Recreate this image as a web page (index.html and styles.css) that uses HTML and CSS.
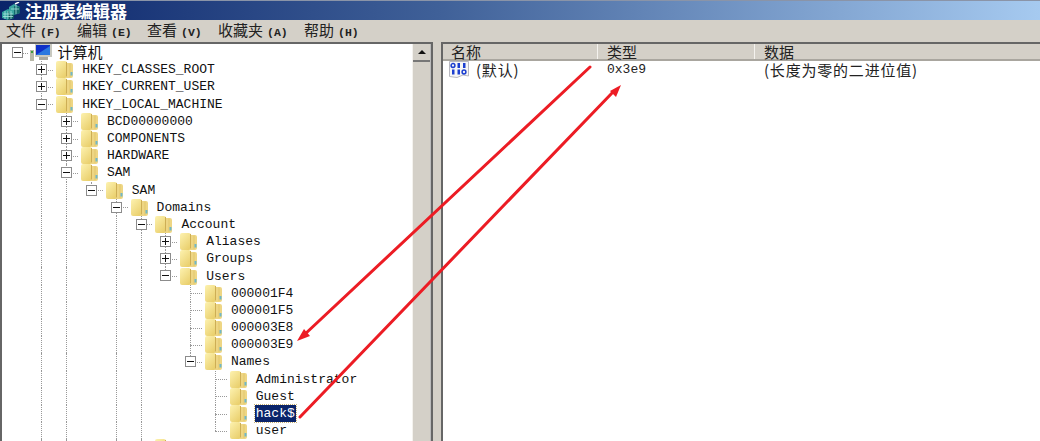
FILE: index.html
```html
<!DOCTYPE html>
<html lang="zh-CN">
<head>
  <meta charset="UTF-8">
  <title>注册表编辑器</title>
  <link rel="stylesheet" href="styles.css">
</head>
<body>
  <svg class="defs" width="0" height="0">
    <defs>
      <linearGradient id="folderFill" x1="0" y1="0" x2="0.7" y2="1">
        <stop offset="0" stop-color="#fdf2b0"/>
        <stop offset="1" stop-color="#ead06e"/>
      </linearGradient>
      <symbol id="folder" viewBox="0 0 17 17">
        <path d="M11 2 H15 Q17 2 17 4 V15 Q17 17 15 17 H8 L11 15 Z" fill="#eed684"/>
        <path d="M0 2 Q0 0 2 0 H9 L11 1 V15 L9 17 H2 Q0 17 0 15 Z" fill="url(#folderFill)"/>
        <path d="M10.5 1 V15.5" stroke="#cdae55" stroke-width="1"/>
        <path d="M14 2.5 V16" stroke="#e2c76c" stroke-width="1"/>
        <rect x="14.5" y="11" width="2" height="3.5" fill="#6fb7c9"/>
      </symbol>
    </defs>
  </svg>

  <div class="titlebar">
    <svg class="app-icon" width="21" height="18" viewBox="0 0 21 18">
      <path d="M1 10 L7 7 L13 10 L13 16 L7 18 L1 16 Z" fill="#2f9f9c"/>
      <path d="M7 9 L13 10 L13 16 L7 18 Z" fill="#0f5a60"/>
      <path d="M8 5 L13 2 L19 5 L19 11 L13 13 L8 11 Z" fill="#3aa6a0"/>
      <path d="M13 4 L19 5 L19 11 L13 13 Z" fill="#14686c"/>
      <path d="M2 12 H12 M2 14.5 H12 M4 9 V17 M7 9 V17 M10 9 V17 M10 7 H18 M15 3 V12" stroke="#a8e6e0" stroke-width="0.8"/>
      <path d="M14 2 L18 0" stroke="#ffffff" stroke-width="1.4"/>
    </svg>
    <span class="app-title">注册表编辑器</span>
  </div>

  <div class="menubar">
    <span class="menu-item m1">文件<i>(F)</i></span>
    <span class="menu-item m2">编辑<i>(E)</i></span>
    <span class="menu-item m3">查看<i>(V)</i></span>
    <span class="menu-item m4">收藏夹<i>(A)</i></span>
    <span class="menu-item m5">帮助<i>(H)</i></span>
  </div>

  <div class="main">
    <div class="tree-pane">
      <div class="tree">
        <!-- 计算机 -->
        <div class="row">
          <span class="cell stub"><i class="box minus"></i></span>
          <svg class="pc-icon" width="22" height="18" viewBox="0 0 22 18">
            <rect x="0" y="6" width="4" height="11" fill="#b8b8a8"/>
            <rect x="1" y="7" width="2" height="2" fill="#3c9a3c"/>
            <rect x="5" y="0" width="17" height="13" fill="#c9c9c0"/>
            <rect x="6" y="1" width="14" height="10" fill="#1030c8"/>
            <path d="M6 11 L20 2 V11 Z" fill="#2a78e0"/>
            <rect x="9" y="13" width="9" height="3" fill="#a8a8a0"/>
          </svg>
          <span class="label cjk">计算机</span>
        </div>

        <div class="row"><span class="cell"></span><span class="cell tee"><i class="box plus"></i></span><svg class="folder"><use href="#folder"/></svg><span class="label">HKEY_CLASSES_ROOT</span></div>
        <div class="row"><span class="cell"></span><span class="cell tee"><i class="box plus"></i></span><svg class="folder"><use href="#folder"/></svg><span class="label">HKEY_CURRENT_USER</span></div>
        <div class="row"><span class="cell"></span><span class="cell tee"><i class="box minus"></i></span><svg class="folder"><use href="#folder"/></svg><span class="label">HKEY_LOCAL_MACHINE</span></div>

        <div class="row"><span class="cell"></span><span class="cell line"></span><span class="cell tee"><i class="box plus"></i></span><svg class="folder"><use href="#folder"/></svg><span class="label">BCD00000000</span></div>
        <div class="row"><span class="cell"></span><span class="cell line"></span><span class="cell tee"><i class="box plus"></i></span><svg class="folder"><use href="#folder"/></svg><span class="label">COMPONENTS</span></div>
        <div class="row"><span class="cell"></span><span class="cell line"></span><span class="cell tee"><i class="box plus"></i></span><svg class="folder"><use href="#folder"/></svg><span class="label">HARDWARE</span></div>
        <div class="row"><span class="cell"></span><span class="cell line"></span><span class="cell tee"><i class="box minus"></i></span><svg class="folder"><use href="#folder"/></svg><span class="label">SAM</span></div>

        <div class="row"><span class="cell"></span><span class="cell line"></span><span class="cell line"></span><span class="cell end"><i class="box minus"></i></span><svg class="folder"><use href="#folder"/></svg><span class="label">SAM</span></div>

        <div class="row"><span class="cell"></span><span class="cell line"></span><span class="cell line"></span><span class="cell"></span><span class="cell tee"><i class="box minus"></i></span><svg class="folder"><use href="#folder"/></svg><span class="label">Domains</span></div>

        <div class="row"><span class="cell"></span><span class="cell line"></span><span class="cell line"></span><span class="cell"></span><span class="cell line"></span><span class="cell tee"><i class="box minus"></i></span><svg class="folder"><use href="#folder"/></svg><span class="label">Account</span></div>

        <div class="row"><span class="cell"></span><span class="cell line"></span><span class="cell line"></span><span class="cell"></span><span class="cell line"></span><span class="cell line"></span><span class="cell tee"><i class="box plus"></i></span><svg class="folder"><use href="#folder"/></svg><span class="label">Aliases</span></div>
        <div class="row"><span class="cell"></span><span class="cell line"></span><span class="cell line"></span><span class="cell"></span><span class="cell line"></span><span class="cell line"></span><span class="cell tee"><i class="box plus"></i></span><svg class="folder"><use href="#folder"/></svg><span class="label">Groups</span></div>
        <div class="row"><span class="cell"></span><span class="cell line"></span><span class="cell line"></span><span class="cell"></span><span class="cell line"></span><span class="cell line"></span><span class="cell end"><i class="box minus"></i></span><svg class="folder"><use href="#folder"/></svg><span class="label">Users</span></div>

        <div class="row"><span class="cell"></span><span class="cell line"></span><span class="cell line"></span><span class="cell"></span><span class="cell line"></span><span class="cell line"></span><span class="cell"></span><span class="cell tee"></span><svg class="folder"><use href="#folder"/></svg><span class="label">000001F4</span></div>
        <div class="row"><span class="cell"></span><span class="cell line"></span><span class="cell line"></span><span class="cell"></span><span class="cell line"></span><span class="cell line"></span><span class="cell"></span><span class="cell tee"></span><svg class="folder"><use href="#folder"/></svg><span class="label">000001F5</span></div>
        <div class="row"><span class="cell"></span><span class="cell line"></span><span class="cell line"></span><span class="cell"></span><span class="cell line"></span><span class="cell line"></span><span class="cell"></span><span class="cell tee"></span><svg class="folder"><use href="#folder"/></svg><span class="label">000003E8</span></div>
        <div class="row"><span class="cell"></span><span class="cell line"></span><span class="cell line"></span><span class="cell"></span><span class="cell line"></span><span class="cell line"></span><span class="cell"></span><span class="cell tee"></span><svg class="folder"><use href="#folder"/></svg><span class="label">000003E9</span></div>
        <div class="row"><span class="cell"></span><span class="cell line"></span><span class="cell line"></span><span class="cell"></span><span class="cell line"></span><span class="cell line"></span><span class="cell"></span><span class="cell end"><i class="box minus"></i></span><svg class="folder"><use href="#folder"/></svg><span class="label">Names</span></div>

        <div class="row"><span class="cell"></span><span class="cell line"></span><span class="cell line"></span><span class="cell"></span><span class="cell line"></span><span class="cell line"></span><span class="cell"></span><span class="cell"></span><span class="cell tee"></span><svg class="folder"><use href="#folder"/></svg><span class="label">Administrator</span></div>
        <div class="row"><span class="cell"></span><span class="cell line"></span><span class="cell line"></span><span class="cell"></span><span class="cell line"></span><span class="cell line"></span><span class="cell"></span><span class="cell"></span><span class="cell tee"></span><svg class="folder"><use href="#folder"/></svg><span class="label">Guest</span></div>
        <div class="row"><span class="cell"></span><span class="cell line"></span><span class="cell line"></span><span class="cell"></span><span class="cell line"></span><span class="cell line"></span><span class="cell"></span><span class="cell"></span><span class="cell tee"></span><svg class="folder"><use href="#folder"/></svg><span class="label selected">hack$</span></div>
        <div class="row"><span class="cell"></span><span class="cell line"></span><span class="cell line"></span><span class="cell"></span><span class="cell line"></span><span class="cell line"></span><span class="cell"></span><span class="cell"></span><span class="cell end"></span><svg class="folder"><use href="#folder"/></svg><span class="label">user</span></div>

        <!-- next key, only the top of its folder shows -->
        <div class="row"><span class="cell"></span><span class="cell line"></span><span class="cell line"></span><span class="cell"></span><span class="cell line"></span><span class="cell line"></span><svg class="folder"><use href="#folder"/></svg></div>
      </div>
      <div class="scrollbar">
        <div class="scroll-btn"><span class="arrow-up"></span></div>
      </div>
    </div>

    <div class="splitter"></div>

    <div class="list-pane">
      <div class="list-head">
        <span class="col-name">名称</span>
        <span class="col-type">类型</span>
        <span class="col-data">数据</span>
      </div>
      <div class="list-row">
        <span class="col-name value-name">
          <svg class="bin-icon" width="20" height="17" viewBox="0 0 20 17">
            <path d="M0.5 0.5 H19.5 V15 L14 14 L8 16.5 L0.5 15.5 Z" fill="#f6f6f6" stroke="#b8b8c0"/>
            <circle cx="4" cy="4.5" r="1.9" fill="none" stroke="#1c3fd0" stroke-width="1.5"/>
            <rect x="8.5" y="2" width="2.5" height="5" fill="#1c3fd0"/>
            <rect x="14" y="2" width="2.5" height="5" fill="#1c3fd0"/>
            <rect x="3" y="8.5" width="2.5" height="5" fill="#1c3fd0"/>
            <rect x="8.5" y="8.5" width="2.5" height="5" fill="#1c3fd0"/>
            <circle cx="15" cy="11" r="1.9" fill="none" stroke="#1c3fd0" stroke-width="1.5"/>
          </svg>
          <span class="cjk-value">(默认)</span>
        </span>
        <span class="col-type mono-value">0x3e9</span>
        <span class="col-data cjk-value">(长度为零的二进位值)</span>
      </div>
    </div>
  </div>

  <!-- red annotation arrows -->
  <svg class="arrows" width="1040" height="441" viewBox="0 0 1040 441">
    <g stroke="#ec1c24" stroke-width="3" stroke-linecap="round" fill="none">
      <path d="M590 67 L304 335"/>
      <path d="M300 417 L613 92"/>
    </g>
    <g fill="#ec1c24">
      <path d="M297 341 L304 329 L310 336 Z"/>
      <path d="M621 85 L610 91 L616 97 Z"/>
    </g>
  </svg>
</body>
</html>
```

FILE: styles.css
```css
html, body {
  margin: 0;
  padding: 0;
}
body {
  position: relative;
  width: 1040px;
  height: 441px;
  overflow: hidden;
  background: #d4d0c8;
  font-family: "Liberation Mono", monospace;
  color: #111;
}
.defs { position: absolute; }

/* title bar */
.titlebar {
  height: 20px;
  box-sizing: border-box;
  border-top: 1px solid #8a94a8;
  display: flex;
  align-items: center;
  gap: 3px;
  padding-left: 1px;
  background: linear-gradient(to right, #0a246a, #3f6098 42%, #a6caf0);
}
.app-title {
  font-family: "Noto Sans CJK SC", sans-serif;
  font-size: 17px;
  font-weight: bold;
  line-height: 16px;
  color: #fff;
}

/* menu */
.menubar {
  height: 22px;
  display: flex;
  align-items: center;
  padding-left: 6px;
  font-family: "Noto Sans CJK SC", sans-serif;
  font-size: 15px;
  line-height: 18px;
  color: #222;
}
.menu-item i {
  font-family: "Liberation Mono", monospace;
  font-style: normal;
  font-weight: bold;
  font-size: 11.5px;
  margin-left: 4px;
}
.m1 { width: 71px; }
.m2 { width: 70px; }
.m3 { width: 71px; }
.m4 { width: 86px; }

/* panes */
.main {
  display: flex;
  height: 399px;
}
.tree-pane {
  flex: none;
  width: 433px;
  box-sizing: border-box;
  border-left: 2px solid #666;
  border-right: 2px solid #666;
  border-top: 2px solid #666;
  display: flex;
  background: #fff;
}
.tree {
  flex: 1;
  overflow: hidden;
  padding-left: 2.6px;
}
.row {
  display: flex;
  align-items: center;
  height: 17.2px;
  font-size: 13px;
}
.cell {
  position: relative;
  flex: none;
  width: 24.8px;
  height: 100%;
}
/* dotted tree connectors */
.line::before, .tee::before, .end::before {
  content: "";
  position: absolute;
  left: 12px;
  top: 0;
  bottom: 0;
  border-left: 1px dotted #999;
}
.end::before { bottom: 50%; }
.tee::after, .end::after, .stub::after {
  content: "";
  position: absolute;
  left: 12px;
  right: 1px;
  top: 50%;
  border-top: 1px dotted #999;
}
/* expander boxes, sit over the connectors */
.box {
  position: absolute;
  z-index: 1;
  left: 7px;
  top: 3px;
  width: 9px;
  height: 9px;
  border: 1px solid #8c8c8c;
  background: #fff;
}
.box::before {
  content: "";
  position: absolute;
  left: 1px;
  right: 1px;
  top: 4px;
  height: 1px;
  background: #111;
}
.plus::after {
  content: "";
  position: absolute;
  top: 1px;
  bottom: 1px;
  left: 4px;
  width: 1px;
  background: #111;
}
.folder {
  flex: none;
  width: 17px;
  height: 17px;
  margin-left: 2px;
  margin-right: 8px;
}
.pc-icon {
  flex: none;
  margin-left: 1px;
  margin-right: 4px;
}
.label {
  white-space: nowrap;
  padding: 1px 1px 0;
  line-height: 16px;
}
.label.cjk {
  font-family: "Noto Sans CJK SC", sans-serif;
  font-size: 15px;
  padding-top: 0;
  margin-top: -1px;
}
.label.selected {
  background: #0a246a;
  color: #fff;
  outline: 1px dotted #c8b070;
}
.scrollbar {
  flex: none;
  width: 19px;
  box-sizing: border-box;
  background: #d4d0c8;
  border-left: 1px solid #f4f2ee;
  border-right: 1px solid #bbb;
}
.scroll-btn {
  height: 16px;
  display: flex;
  align-items: center;
  justify-content: center;
  border-bottom: 2px solid #777;
}
.arrow-up {
  width: 0;
  height: 0;
  border-left: 4px solid transparent;
  border-right: 4px solid transparent;
  border-bottom: 4px solid #111;
}
.splitter {
  flex: none;
  width: 8px;
}
.list-pane {
  flex: 1;
  background: #fff;
  border-top: 2px solid #666;
  border-left: 2px solid #666;
}
.list-head {
  display: flex;
  height: 15px;
  background: #d4d0c8;
  border-bottom: 2px solid #a9a69f;
  font-family: "Noto Sans CJK SC", sans-serif;
  font-size: 15px;
  line-height: 15px;
  color: #222;
}
.col-name { flex: none; width: 155px; padding-left: 8px; box-sizing: border-box; }
.col-type { flex: none; width: 157px; padding-left: 9px; box-sizing: border-box; }
.col-data { flex: none; width: 280px; padding-left: 9px; box-sizing: border-box; }
.list-head .col-name, .list-head .col-type { border-right: 1px solid #f4f2ee; }
.list-row {
  display: flex;
  align-items: center;
  height: 17px;
  color: #222;
}
.value-name {
  display: flex;
  align-items: center;
  gap: 7px;
  padding-left: 6px;
}
.cjk-value {
  font-family: "Noto Sans CJK SC", sans-serif;
  font-size: 15px;
  line-height: 17px;
  letter-spacing: 0.8px;
}
.mono-value { font-size: 13px; }

/* annotation arrows over the window */
.arrows {
  position: absolute;
  left: 0;
  top: 0;
  pointer-events: none;
}
```
